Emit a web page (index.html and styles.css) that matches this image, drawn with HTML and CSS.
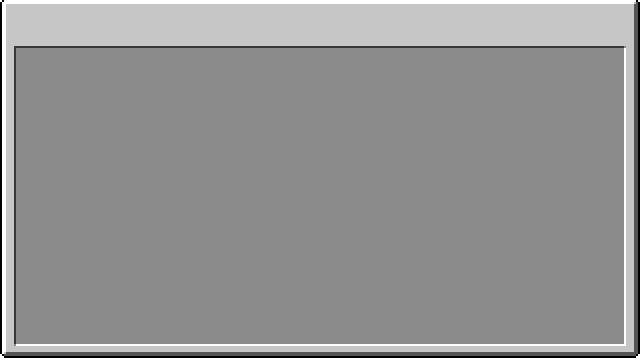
FILE: index.html
```html
<!DOCTYPE html>
<html lang="en">
<head>
<meta charset="utf-8">
<title>Panel</title>
<link rel="stylesheet" href="styles.css">
</head>
<body>
<div class="panel">
  <div class="slot-area"></div>
</div>
</body>
</html>
```
FILE: styles.css
```css
html, body {
  margin: 0;
  padding: 0;
  background: #ffffff;
}
body {
  width: 640px;
  height: 360px;
  overflow: hidden;
}
.panel {
  position: relative;
  box-sizing: border-box;
  width: 640px;
  height: 360px;
  margin-top: -2px;
  border: 2px solid #000000;
  background: #c6c6c6;
  box-shadow: inset -4px -4px 0 #555555, inset 4px 4px 0 #ffffff;
  padding: 46px 12px 10px 12px;
  display: flex;
  flex-direction: column;
}
/* pixel corner patches of the outer frame */
.panel::before {
  content: "";
  position: absolute;
  top: 0;
  left: -2px;
  width: 2px;
  height: 2px;
  background: #ffffff;
  box-shadow:
    2px 0 0 #000000,
    638px 0 0 #ffffff,
    636px 0 0 #000000,
    634px 0 0 #ffffff,
    634px 2px 0 #c6c6c6,
    636px 2px 0 #555555,
    0 354px 0 #ffffff,
    0 356px 0 #ffffff,
    2px 356px 0 #ffffff,
    2px 354px 0 #000000,
    2px 352px 0 #ffffff,
    4px 352px 0 #c6c6c6,
    4px 354px 0 #555555,
    638px 354px 0 #ffffff,
    638px 356px 0 #ffffff,
    636px 356px 0 #ffffff,
    636px 354px 0 #000000;
}
.slot-area {
  position: relative;
  flex: 1;
  background: #8b8b8b;
  box-shadow: inset 2px 2px 0 #373737, inset -2px -2px 0 #ffffff;
}
/* mixed corner pixels of the sunken area */
.slot-area::before {
  content: "";
  position: absolute;
  top: 0;
  right: 0;
  width: 2px;
  height: 2px;
  background: #8b8b8b;
}
.slot-area::after {
  content: "";
  position: absolute;
  bottom: 0;
  left: 0;
  width: 2px;
  height: 2px;
  background: #8b8b8b;
}
```
